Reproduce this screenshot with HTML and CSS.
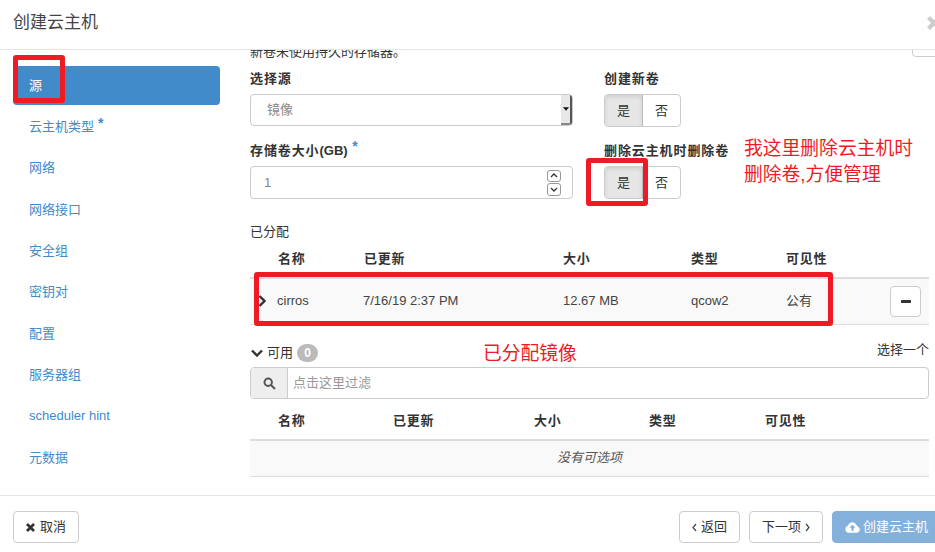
FILE: index.html
```html
<!DOCTYPE html>
<html lang="zh-CN">
<head>
<meta charset="utf-8">
<title>创建云主机</title>
<link rel="stylesheet" href="styles.css">
</head>
<body>
<div class="modal">
  <header class="modal-header">
    <h1 class="modal-title">创建云主机</h1>
    <svg class="close-icon" viewBox="0 0 14 14"><path d="M3 0 7 4 11 0 14 3 10 7 14 11 11 14 7 10 3 14 0 11 4 7 0 3Z"/></svg>
  </header>
  <div class="modal-body">
    <nav class="sidebar">
      <a class="nav-item active">源</a>
      <a class="nav-item">云主机类型 <span class="req">*</span></a>
      <a class="nav-item">网络</a>
      <a class="nav-item">网络接口</a>
      <a class="nav-item">安全组</a>
      <a class="nav-item">密钥对</a>
      <a class="nav-item">配置</a>
      <a class="nav-item">服务器组</a>
      <a class="nav-item">scheduler hint</a>
      <a class="nav-item">元数据</a>
    </nav>
    <main class="content">
      <div class="note-row">
        <p class="note">新卷未使用持久的存储器。</p>
        <span class="clipped-btn"></span>
      </div>
      <div class="form-grid">
        <div class="field">
          <label class="field-label">选择源</label>
          <div class="control select-box">
            <span class="select-value">镜像</span>
            <span class="select-arrow"><svg viewBox="0 0 7 4" class="arrow-icon"><path d="M0 0H7L3.5 4Z"/></svg></span>
          </div>
        </div>
        <div class="field">
          <label class="field-label">创建新卷</label>
          <div class="btn-group"><span class="seg on">是</span><span class="seg">否</span></div>
        </div>
        <div class="field">
          <label class="field-label">存储卷大小<span class="latin">(GB)</span> <span class="req">*</span></label>
          <div class="control number-box">
            <span class="number-value">1</span>
            <span class="spinner">
              <span class="spin"><svg viewBox="0 0 8 5"><path d="M1 4 4 1 7 4"/></svg></span>
              <span class="spin"><svg viewBox="0 0 8 5"><path d="M1 1 4 4 7 1"/></svg></span>
            </span>
          </div>
        </div>
        <div class="field">
          <label class="field-label">删除云主机时删除卷</label>
          <div class="btn-group"><span class="seg on">是</span><span class="seg">否</span></div>
        </div>
      </div>
      <div class="section-title">已分配</div>
      <table class="grid-table">
        <colgroup>
          <col class="c-toggle"><col class="c-a1"><col class="c-a2"><col class="c-a3"><col class="c-a4"><col class="c-a5"><col>
        </colgroup>
        <thead>
          <tr><th></th><th>名称</th><th>已更新</th><th>大小</th><th>类型</th><th>可见性</th><th></th></tr>
        </thead>
        <tbody>
          <tr class="row-allocated">
            <td class="toggle-cell"><svg class="chev" viewBox="0 0 8 12"><path d="M1.5 1 6.5 6 1.5 11"/></svg></td>
            <td class="tight">cirros</td><td class="tight">7/16/19 2:37 PM</td><td>12.67 MB</td><td>qcow2</td><td>公有</td>
            <td class="action-cell"><span class="minus-btn"><svg viewBox="0 0 10 3"><rect width="10" height="3" rx=".5"/></svg></span></td>
          </tr>
        </tbody>
      </table>
      <div class="avail-row">
        <div class="avail-left">
          <svg class="chev-down" viewBox="0 0 12 8"><path d="M1 1.5 6 6.5 11 1.5"/></svg>
          <span>可用</span><span class="badge">0</span>
        </div>
        <span class="pick-one">选择一个</span>
      </div>
      <div class="search-group">
        <span class="search-addon"><svg viewBox="0 0 13 13"><circle cx="5.2" cy="5.2" r="3.7"/><path d="M8 8 12 12"/></svg></span>
        <span class="search-input">点击这里过滤</span>
      </div>
      <table class="grid-table second">
        <colgroup>
          <col class="c-toggle"><col class="c-b1"><col class="c-b2"><col class="c-b3"><col class="c-b4"><col>
        </colgroup>
        <thead>
          <tr><th></th><th>名称</th><th>已更新</th><th>大小</th><th>类型</th><th>可见性</th></tr>
        </thead>
        <tbody>
          <tr class="row-empty"><td colspan="6">没有可选项</td></tr>
        </tbody>
      </table>
    </main>
  </div>
  <footer class="modal-footer">
    <span class="btn"><svg class="x-icon" viewBox="0 0 14 14"><path d="M3 0 7 4 11 0 14 3 10 7 14 11 11 14 7 10 3 14 0 11 4 7 0 3Z"/></svg>取消</span>
    <div class="footer-right">
      <span class="btn"><svg class="angle" viewBox="0 0 5 9"><path d="M4 1 1 4.5 4 8"/></svg>返回</span>
      <span class="btn">下一项<svg class="angle after" viewBox="0 0 5 9"><path d="M1 1 4 4.5 1 8"/></svg></span>
      <span class="btn primary"><svg class="cloud" viewBox="0 0 16 12"><path fill-rule="evenodd" d="M4 12A3.7 3.7 0 0 1 3.2 4.7 4.6 4.6 0 0 1 11.8 3.6 3 3 0 0 1 13.6 5.6 3.3 3.3 0 0 1 12.5 12ZM8 3.5 4.8 6.8H6.8V10H9.2V6.8H11.2Z"/></svg>创建云主机</span>
    </div>
  </footer>

  <div class="mark mark-source"></div>
  <div class="mark mark-delete"></div>
  <div class="mark mark-row"></div>
  <div class="annotation note-delete">我这里删除云主机时<br>删除卷,方便管理</div>
  <div class="annotation note-image">已分配镜像</div>
</div>
</body>
</html>
```

FILE: styles.css
```css
* { box-sizing: border-box; }
html, body { margin: 0; height: 100%; overflow: hidden; background: #fff; }
body {
  font-family: "Liberation Sans", "Noto Sans CJK SC", sans-serif;
  font-size: 13px;
  line-height: 18px;
  color: #333;
}
.modal { position: relative; width: 935px; height: 552px; overflow: hidden; display: flex; flex-direction: column; }

.modal-header {
  height: 50px; flex: none; border-bottom: 1px solid #e5e5e5;
  padding-left: 13px; display: flex; align-items: center; justify-content: space-between;
}
.modal-title { margin: 0 0 3px; font-size: 17px; font-weight: 400; color: #444; line-height: 24px; }
.close-icon { width: 14px; height: 14px; fill: #ccc; margin: 0 -6px 3px 0; flex: none; }

.modal-body { height: 445px; flex: none; display: flex; overflow: hidden; }
.sidebar { width: 250px; flex: none; padding: 16px 0 0 13px; }
.nav-item {
  display: flex; align-items: center; gap: 4px; width: 207px; height: 39px; margin-bottom: 2.37px;
  padding-left: 16px; border-radius: 4px; color: #428bca;
}
.nav-item.active { background: #428bca; color: #fff; }
.req { color: #428bca; font-weight: 700; font-size: 14px; line-height: 10px; letter-spacing: 0; align-self: center; position: relative; top: -4px; }

.content { flex: 1; min-width: 0; padding-right: 6px; overflow: hidden; }
.note-row { display: flex; justify-content: space-between; height: 18px; margin-top: -7px; }
.note { margin: 0; color: #333; }
.clipped-btn {
  width: 30px; height: 14px; margin-right: -13px; flex: none;
  border: 1px solid #ccc; border-radius: 4px;
}

.form-grid { display: grid; grid-template-columns: 323px 1fr; column-gap: 31px; row-gap: 15px; margin-top: 9px; }
.field-label { display: block; font-weight: 700; margin-bottom: 6px; white-space: nowrap; letter-spacing: .9px; }
.latin { letter-spacing: 0; }
.control { display: flex; align-items: center; border: 1px solid #ccc; border-radius: 4px; color: #888; }
.select-box { height: 32px; padding-left: 16px; justify-content: space-between; overflow: hidden; }
.select-arrow {
  width: 11px; height: 100%; background: #e8e8e8; border-right: 2px solid #555; border-bottom: 2px solid #888;
  display: flex; align-items: center; justify-content: center;
}
.arrow-icon { width: 6px; height: 4px; fill: #111; }
.number-box { height: 33px; padding: 0 11px 0 13px; justify-content: space-between; }
.spinner { display: flex; flex-direction: column; gap: 1px; }
.spin {
  width: 14px; height: 12.5px; border: 1px solid #999; border-radius: 3px;
  display: flex; align-items: center; justify-content: center;
}
.spin svg { width: 8px; height: 5px; fill: none; stroke: #333; stroke-width: 1.3; }

.btn-group { display: flex; width: 77px; height: 33px; border: 1px solid #ccc; border-radius: 4px; overflow: hidden; }
.seg { flex: 1; display: flex; align-items: center; justify-content: center; }
.seg.on { flex: none; width: 38px; background: #e6e6e6; border-right: 1px solid #bbb; box-shadow: inset 0 2px 4px rgba(0,0,0,.1); }

.section-title { margin-top: 23.5px; }
.grid-table { width: 679px; border-collapse: collapse; table-layout: fixed; }
.grid-table th { text-align: left; font-weight: 700; padding: 9px 8px; height: 36px; border-bottom: 2px solid #ddd; letter-spacing: .7px; }
.grid-table td { padding: 0 8px 1px; color: #444; white-space: nowrap; }
.c-toggle { width: 20px; }
.c-a1 { width: 86px; }
.c-a2 { width: 199px; }
.c-a3 { width: 128px; }
.c-a4 { width: 95px; }
.c-a5 { width: 104px; }
.c-b1 { width: 115px; }
.c-b2 { width: 141px; }
.c-b3 { width: 115px; }
.c-b4 { width: 116px; }
.row-allocated { height: 47px; background: #f9f9f9; border-bottom: 1px solid #ddd; }
.grid-table .toggle-cell { padding: 0 0 1px 8px; }
.grid-table .tight { padding-left: 7px; }
.grid-table .action-cell { padding-bottom: 0; }
.chev { display: block; width: 8px; height: 12px; fill: none; stroke: #333; stroke-width: 2.4; }
.minus-btn {
  display: flex; align-items: center; justify-content: center; width: 31px; height: 31px;
  background: #fff; border: 1px solid #ccc; border-radius: 4px;
}
.minus-btn svg { width: 10px; height: 3px; fill: #333; }

.avail-row { display: flex; justify-content: space-between; align-items: flex-start; height: 42px; padding-top: 19px; }
.avail-left { display: flex; align-items: center; }
.chev-down { width: 12px; height: 8px; margin: 0 4px 0 1px; fill: none; stroke: #333; stroke-width: 2.4; }
.badge {
  width: 21px; height: 18px; margin-left: 4px; border-radius: 9px; background: #bbb; color: #fff;
  font-size: 12px; font-weight: 700; display: flex; align-items: center; justify-content: center;
}
.pick-one { margin-top: -3px; }

.search-group { display: flex; width: 679px; height: 32px; border: 1px solid #ccc; border-radius: 4px; overflow: hidden; }
.search-addon {
  width: 37px; flex: none; background: #eee; border-right: 1px solid #ccc;
  display: flex; align-items: center; justify-content: center;
}
.search-addon svg { width: 13px; height: 13px; fill: none; stroke: #555; stroke-width: 2; }
.search-input { padding-left: 5px; color: #999; display: flex; align-items: center; }

.second { margin-top: 4px; }
.row-empty { height: 36px; background: #f9f9f9; border-bottom: 1px solid #ddd; }
.grid-table .row-empty td { text-align: center; font-style: italic; color: #555; }

.modal-footer {
  flex: 1; border-top: 1px solid #e5e5e5; padding: 15px 0 0 13px;
  display: flex; justify-content: space-between; align-items: flex-start;
}
.footer-right { display: flex; gap: 9px; margin-right: -6px; }
.btn {
  display: flex; align-items: center; height: 32px; padding: 0 12px;
  border: 1px solid #ccc; border-radius: 4px; color: #333; background: #fff;
}
.btn.primary { background: #84b1dc; border-color: #84b1dc; color: #fff; padding: 0 12px; }
.x-icon { width: 9px; height: 9px; fill: #333; margin-right: 5px; }
.angle { width: 5px; height: 9px; fill: none; stroke: #444; stroke-width: 1.2; margin-right: 4px; }
.angle.after { margin: 0 0 0 4px; }
.cloud { width: 15px; height: 12px; fill: #fff; margin-right: 3px; }

.mark { position: absolute; border: 5px solid #ed1c24; border-radius: 3px; }
.mark-source { left: 13px; top: 55px; width: 52px; height: 48px; }
.mark-delete { left: 586px; top: 158px; width: 62px; height: 48px; }
.mark-row { left: 254px; top: 272px; width: 579px; height: 54px; }
.annotation { position: absolute; color: #ed1c24; font-size: 18.8px; line-height: 26px; white-space: nowrap; }
.note-delete { left: 744px; top: 136px; }
.note-image { left: 483px; top: 341px; }
```
